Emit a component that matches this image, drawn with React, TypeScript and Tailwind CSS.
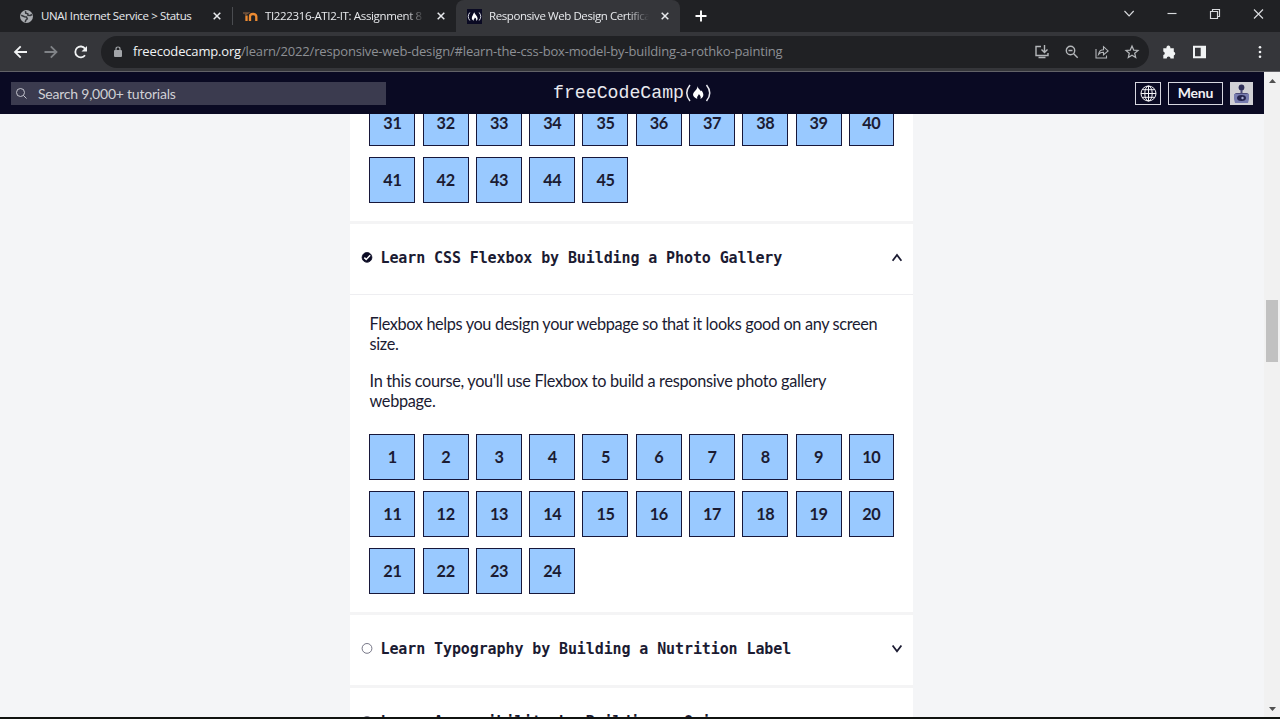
import type { ReactNode } from "react";

const steps = (from: number, to: number) =>
  Array.from({ length: to - from + 1 }, (_, i) => from + i);

function StepGrid({ from, to }: { from: number; to: number }) {
  return (
    <div className="grid grid-cols-[repeat(9,46px)_45px] gap-x-[7.28px] gap-y-[11px] pl-[19.4px]">
      {steps(from, to).map((n) => (
        <a
          key={n}
          className="flex h-[46px] items-center justify-center border border-[#17173a] bg-[#99c9ff] text-[16.3px] leading-[20px] font-bold tracking-[-0.4px] text-[#1b1b32]"
        >
          {n}
        </a>
      ))}
    </div>
  );
}

function BlockHeader({ title, done, open }: { title: string; done?: boolean; open?: boolean }) {
  return (
    <div className="flex h-[70px] shrink-0 items-center bg-white pr-[10.5px] pb-[4px] pl-[11px]">
      <svg className="mr-[7.5px] h-[12px] w-[12px] shrink-0" viewBox="0 0 12 12">
        <circle cx="6" cy="6.4" r="4.9" fill={done ? "#0a0a23" : "#fff"} stroke={done ? "#0a0a23" : "#55556a"} strokeWidth=".8" />
        {done && <path d="M3.3 6.6 5.2 8.4 9.2 4.3" fill="none" stroke="#fff" strokeWidth="1.5" />}
      </svg>
      <h3 className="flex-1 pt-[2px] font-['DejaVu_Sans_Mono',monospace] text-[15px] leading-[20px] font-bold tracking-[-0.105px] whitespace-nowrap text-[#1b1b32]">
        {title}
      </h3>
      <svg className="mt-[2px] h-[12px] w-[12px]" viewBox="0 0 12 12" fill="none" stroke="#1b1b32" strokeWidth="1.8">
        <path d={open ? "M1.6 8.8 6 3l4.4 5.800" : "M1.6 2.5 6 8.3l4.4-5.800"} />
      </svg>
    </div>
  );
}

function TabClose() {
  return (
    <svg className="h-[8px] w-[8px] shrink-0" viewBox="0 0 8 8" stroke="#e8eaed" strokeWidth="1.5">
      <path d="m.7.7 6.6 6.6M7.3.7.7 7.3" />
    </svg>
  );
}

function TabTitle({ children, width }: { children: ReactNode; width: string }) {
  return <span className={`overflow-hidden whitespace-nowrap ${width}`}>{children}</span>;
}

function TabStrip() {
  return (
    <div className="flex h-[32px] shrink-0 items-center bg-[#202124] text-[11.5px] text-[#e8eaed]">
      <div className="flex h-full w-[232px] shrink-0 items-center pl-[20px]">
        <svg className="mr-[8px] h-[13px] w-[13px] shrink-0" viewBox="0 0 13 13">
          <circle cx="6.5" cy="6.5" r="6.5" fill="#a9acb0" />
          <path d="M1.2 5.3 4.5 6.7l2 .2.8 2-1.6 1.4-.4 1.8M5.5 1.1l.2 2.1 2.1.7.2 1.4 2.4.2 1.6-1" fill="none" stroke="#34363a" strokeWidth="1.5" />
        </svg>
        <TabTitle width="w-[172px] tracking-[-0.34px]">UNAI Internet Service &gt; Status</TabTitle>
        <TabClose />
      </div>
      <div className="h-[18px] w-px shrink-0 bg-[#4a4c50]" />
      <div className="flex h-full w-[223px] shrink-0 items-center pl-[10px]">
        <svg className="mr-[7px] h-[14px] w-[15px] shrink-0" viewBox="0 0 15 14" fill="none">
          <path d="M0 4h5L2 6" stroke="#74543c" strokeWidth="1.5" />
          <path d="M3.500 12V6.500M7 12V7.500q0-2.500 3-2.500t3.300 2.500V12" stroke="#ed8b32" strokeWidth="2.300" />
        </svg>
        <TabTitle width="w-[160px] tracking-[-0.36px] [mask-image:linear-gradient(to_right,black_88%,transparent)]">
          TI222316-ATI2-IT: Assignment 8
        </TabTitle>
        <span className="ml-[12px] flex"><TabClose /></span>
      </div>
      <div className="flex h-full w-[224px] shrink-0 items-center rounded-t-[8px] bg-[#35363a] pl-[11px]">
        <svg className="mr-[7px] h-[15px] w-[15px] shrink-0" viewBox="0 0 15 15">
          <path fill="#0a0a23" d="M0 0h15v15H0z" />
          <path d="M2.800 3.500Q-.3 7.500 2.800 11.500M12.200 3.500q3.100 4 0 8" fill="none" stroke="#d9dae5" />
          <path d="M7.200 3.300c.5 2.300 3.400 3.700 3.400 6.100 0 1.100-.6 1.900-1.400 2.300.3-1.800-.4-2.600-1.400-3.100.1 1.200-1.500 1.500-1 3.100-3.500-1.500-1.600-4.200.4-8.400" fill="#fff" />
        </svg>
        <TabTitle width="w-[160px] tracking-[-0.42px] [mask-image:linear-gradient(to_right,black_86%,transparent)]">
          Responsive Web Design Certifica
        </TabTitle>
        <span className="ml-[12px] flex"><TabClose /></span>
      </div>
      <svg className="ml-[15px] h-[12px] w-[12px]" viewBox="0 0 12 12" stroke="#fff" strokeWidth="1.9">
        <path d="M6 .5v11M.5 6h11" />
      </svg>
      <div className="ml-auto flex items-center pr-[13px] pb-[5px]">
        <svg className="h-[11px] w-[151px]" viewBox="0 0 151 11" fill="none" stroke="#d8dadd" strokeWidth="1.15">
          <path d="m8.5 3 4.6 4.800L17.700 3" />
          <path d="M51.500 5.500h9" />
          <path d="M94.500 3.500h7v7h-7zM96.500 3.200V1.500h7v7h-1.700" />
          <path d="m138 1.500 9 9M147 1.500l-9 9" />
        </svg>
      </div>
    </div>
  );
}

function Toolbar() {
  return (
    <div className="flex h-[40px] shrink-0 items-center border-b border-[#626267] bg-[#35363a]">
      <svg className="ml-[13px] h-[14px] w-[76px]" viewBox="0 0 76 14" fill="none" strokeWidth="1.8">
        <path d="M14 7H2M7.700 1.300 2 7l5.700 5.700" stroke="#f1f3f4" />
        <path d="M31.500 7h12M37.800 1.300 43.500 7l-5.700 5.700" stroke="#808387" />
        <path d="M72 10.200A5.400 5.400 0 1 1 72 3.600" stroke="#f1f3f4" />
        <path d="M74 1v5.500h-5.500z" fill="#f1f3f4" />
      </svg>
      <div className="ml-[12px] flex h-[32px] w-[1048px] items-center rounded-full bg-[#202124] pl-[13px]">
        <svg className="mr-[11px] h-[11px] w-[8px]" viewBox="0 0 8 11">
          <path d="M2 5V3q0-2 2-2t2 2v2" fill="none" stroke="#a2a5a9" strokeWidth="1.200" />
          <rect y="4" width="8" height="7" rx="1" fill="#a2a5a9" />
        </svg>
        <span className="text-[13px] tracking-[-0.165px] whitespace-nowrap text-[#8d9095]">
          <span className="text-[#f1f3f4]">freecodecamp.org</span>
          /learn/2022/responsive-web-design/#learn-the-css-box-model-by-building-a-rothko-painting
        </span>
        <svg className="mr-[9px] ml-auto h-[16px] w-[106px] shrink-0" viewBox="0 0 106 16" fill="none" stroke="#b4b7ba" strokeWidth="1.400">
          <path d="M7 2.500H2v9h12V9M4.500 13.500h7" />
          <path d="M10.500 1v7M7.500 5.500l3 3 3-3" />
          <circle cx="36.500" cy="6.500" r="4.200" />
          <path d="m39.700 9.700 4 4M34.500 6.500h4" />
          <path d="M62 5v9h10.500v-2.500M64.500 10.500q.8-4.700 5-4.700V2.700l4.600 4.200-4.600 4v-2.600q-3-.2-5 2.200z" strokeWidth="1.100" />
          <path d="m98 2 1.700 4.100 4.300.3-3.300 2.800 1 4.300L98 11.200l-3.700 2.300 1-4.300L92 6.400l4.300-.3z" strokeWidth="1.200" />
        </svg>
      </div>
      <svg className="ml-[13px] h-[14px] w-[104px]" viewBox="0 0 104 14" fill="#f1f3f4">
        <path d="M1.300 3.200h3.200a2 2 0 1 1 3.800 0h3.500v3.500a1.900 1.900 0 0 1 0 3.700v3.100H8.500a1.900 1.900 0 0 0-3.800 0H1.300v-3.400a1.900 1.900 0 0 0 0-3.700z" />
        <path d="M31 .700h13v12.600H31zM33 2.700v8.600h5.700V2.700z" fillRule="evenodd" />
        <circle cx="98" cy="2.300" r="1.300" /><circle cx="98" cy="7" r="1.300" /><circle cx="98" cy="11.700" r="1.300" />
      </svg>
    </div>
  );
}

function SiteNav() {
  return (
    <nav className="flex h-[42px] shrink-0 items-center bg-[#0a0a23] pl-[11px]">
      <div className="flex h-[23px] w-[375px] items-center bg-[#3b3b4f] pl-[5px] text-[14px] tracking-[-0.22px] text-[#d0d0d5]">
        <svg className="mr-[11px] h-[11px] w-[11px]" viewBox="0 0 11 11" fill="none" stroke="#c4c4cd">
          <circle cx="4.500" cy="4.500" r="4" /><path d="m7.500 7.500 3 3" />
        </svg>
        Search 9,000+ tutorials
      </div>
      <div className="ml-[167px] flex items-center">
        <span className="w-[131px] pt-px font-['Liberation_Mono',monospace] text-[18.200px] whitespace-nowrap text-[#e8e8ee]">freeCodeCamp</span>
        <svg className="h-[20px] w-[28px]" viewBox="0 0 28 20">
          <path d="M6 2Q-.500 10 6 18M22.500 2Q29 10 22.500 18" fill="none" stroke="#e8e8ee" strokeWidth="1.500" />
          <path d="M13.500 3c.5 3 2.500 3.300 3.300 5.200l.7-.8c2 2.500 3.300 6-1 8.600.8-2.500-.5-3.600-1.700-5-.3 1.800-2.400 2.600-1.400 5C7.600 13.500 8.500 10.500 11 8c1.800-2 2.500-3 2.500-5z" fill="#fff" />
        </svg>
      </div>
      <div className="mr-[11px] ml-auto flex items-center gap-[7px]">
        <div className="flex h-[23px] w-[26px] items-center justify-center border border-[#d7d7df]">
          <svg className="h-[17px] w-[17px]" viewBox="0 0 17 17" fill="none" stroke="#f4f4f7">
            <circle cx="8.500" cy="8.500" r="7.500" /><ellipse cx="8.500" cy="8.500" rx="3.700" ry="7.500" />
            <path d="M8.500 1v15M1 8.500h15M2.200 4.700h12.600M2.200 12.300h12.600" />
          </svg>
        </div>
        <div className="flex h-[23px] w-[55px] items-center justify-center border border-[#d7d7df] pb-px text-[14px] font-bold tracking-[-0.2px] text-[#f0f0f4]">Menu</div>
        <svg className="h-[23px] w-[23px]" viewBox="0 0 23 23">
          <path fill="#d0d0d5" d="M0 0h23v23H0z" />
          <circle cx="11.500" cy="5.500" r="2.900" fill="#30305a" />
          <path d="M10.500 8h2v3h4.200q2 0 2 2v2H4.500v-2q0-2 2-2h4z" fill="#4c4c7a" />
          <path d="M4 12h15v5l-1 4H5l-1-4z" fill="#777caf" />
          <ellipse cx="11.500" cy="16" rx="4.500" ry="2.900" fill="#24244e" />
          <circle cx="12.500" cy="16" r="1.200" fill="#a9aed5" />
        </svg>
      </div>
    </nav>
  );
}

export default function App() {
  return (
    <div className="flex h-[719px] w-[1280px] flex-col overflow-hidden bg-[#f5f6f7] font-['Lato',sans-serif]">
      <div className="shrink-0 font-['Open_Sans','Noto_Sans',sans-serif]">
        <TabStrip />
        <Toolbar />
      </div>
      <div className="flex min-h-0 flex-1">
        <div className="flex min-w-0 flex-1 flex-col">
          <SiteNav />
          <main className="flex min-h-0 flex-1 flex-col items-center overflow-hidden bg-[#f4f5f7]">
            <div className="ml-[-1px] flex w-[563px] flex-col bg-[#f4f4f5]">
              <section className="h-[107px] shrink-0 overflow-hidden bg-white">
                <div className="mt-[-14px]"><StepGrid from={31} to={45} /></div>
              </section>
              <section className="mt-[3px] h-[388px] shrink-0 bg-white">
                <BlockHeader title="Learn CSS Flexbox by Building a Photo Gallery" done open />
                <div className="border-t border-[#eeeef1] pt-[19px]">
                  <div className="flex flex-col gap-[16.500px] pl-[19.500px] text-[16.300px] leading-[20.300px] tracking-[-0.305px] whitespace-nowrap text-[#1b1b32]">
                    <p><span className="tracking-[-0.36px]">Flexbox helps you design your webpage so that it looks good on any screen</span><br />size.</p>
                    <p>In this course, you'll use Flexbox to build a responsive photo gallery<br />webpage.</p>
                  </div>
                  <div className="pt-[22.300px]"><StepGrid from={1} to={24} /></div>
                </div>
              </section>
              <section className="mt-[3px] shrink-0"><BlockHeader title="Learn Typography by Building a Nutrition Label" /></section>
              <section className="mt-[3px] shrink-0"><BlockHeader title="Learn Accessibility by Building a Quiz" /></section>
            </div>
          </main>
        </div>
        <aside className="flex w-[16px] shrink-0 flex-col items-center bg-[#f1f1f1]">
          <svg className="mt-[6px] h-[5px] w-[7px]" viewBox="0 0 7 5"><path d="M0 5 3.500 1 7 5z" fill="#505050" /></svg>
          <div className="mt-[217px] h-[62px] w-[12px] bg-[#c1c1c1]" />
          <svg className="mt-auto mb-[5px] h-[5px] w-[7px]" viewBox="0 0 7 5"><path d="M0 0h7L3.500 4z" fill="#505050" /></svg>
        </aside>
      </div>
      <footer className="h-[2px] shrink-0 bg-[#101310]" />
    </div>
  );
}
